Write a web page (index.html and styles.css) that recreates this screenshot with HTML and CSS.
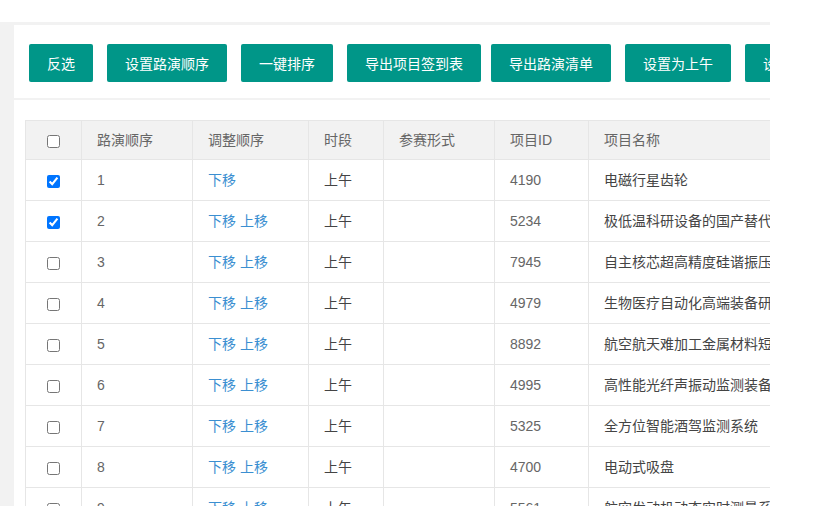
FILE: index.html
```html
<!DOCTYPE html>
<html>
<head>
    <meta charset="UTF-8">
    <title>路演顺序管理</title>
    <link rel="stylesheet" href="styles.css">
</head>
<body>
    <div class="frame">
        <div class="card card-head">
            <div class="toolbar">
                <button class="btn">反选</button>
                <button class="btn">设置路演顺序</button>
                <button class="btn">一键排序</button>
                <button class="btn">导出项目签到表</button>
                <button class="btn tight">导出路演清单</button>
                <button class="btn">设置为上午</button>
                <button class="btn">设置为下午</button>
            </div>
        </div>
        <div class="card card-body">
            <table class="grid">
                <colgroup>
                    <col style="width:56px">
                    <col style="width:111px">
                    <col style="width:116px">
                    <col style="width:75px">
                    <col style="width:111px">
                    <col style="width:94px">
                    <col style="width:300px">
                </colgroup>
                <thead>
                    <tr>
                        <th class="check"><input type="checkbox"></th>
                        <th>路演顺序</th>
                        <th>调整顺序</th>
                        <th>时段</th>
                        <th>参赛形式</th>
                        <th>项目ID</th>
                        <th>项目名称</th>
                    </tr>
                </thead>
                <tbody id="rows"></tbody>
            </table>
        </div>
    </div>

    <script>
        const projects = [
            { id: 4190, name: "电磁行星齿轮", checked: true },
            { id: 5234, name: "极低温科研设备的国产替代", checked: true },
            { id: 7945, name: "自主核芯超高精度硅谐振压力传感器" },
            { id: 4979, name: "生物医疗自动化高端装备研发" },
            { id: 8892, name: "航空航天难加工金属材料短流程制造" },
            { id: 4995, name: "高性能光纤声振动监测装备" },
            { id: 5325, name: "全方位智能酒驾监测系统" },
            { id: 4700, name: "电动式吸盘" },
            { id: 5561, name: "航空发动机动态实时测量系统" }
        ];

        const tbody = document.getElementById('rows');

        projects.forEach((p, i) => {
            const links = i === 0
                ? '<a class="link">下移</a>'
                : '<a class="link">下移</a> <a class="link">上移</a>';
            const tr = document.createElement('tr');
            tr.innerHTML = `
                <td class="check"><input type="checkbox" ${p.checked ? 'checked' : ''}></td>
                <td>${i + 1}</td>
                <td>${links}</td>
                <td class="dark">上午</td>
                <td></td>
                <td>${p.id}</td>
                <td class="dark">${p.name}</td>`;
            tbody.appendChild(tr);
        });
    </script>
</body>
</html>
```

FILE: styles.css
```css
* {
    box-sizing: border-box;
}

body {
    margin: 0;
    background: #fff;
    font-family: "Liberation Sans", Arial, "Noto Sans CJK SC", sans-serif;
    font-size: 14px;
    color: #666;
}

.frame {
    width: 770px;
    height: 484px;
    margin-top: 22px;
    padding: 3px 0 0 14px;
    background: #f2f2f2;
    overflow: hidden;
}

.card {
    width: 900px;
    background: #fff;
}

.card-head {
    padding: 19px 15px 16px;
    margin-bottom: 2px;
}

.toolbar {
    display: flex;
    gap: 14px;
    white-space: nowrap;
}

.btn {
    height: 38px;
    padding: 0 18px;
    border: none;
    border-radius: 2px;
    background: #009688;
    color: #fff;
    font-family: inherit;
    font-size: 14px;
    flex-shrink: 0;
}

.btn.tight {
    margin-left: -4px;
}

.card-body {
    padding: 20px 11px;
    height: 500px;
}

.grid {
    table-layout: fixed;
    width: 863px;
    border-collapse: collapse;
}

.grid th,
.grid td {
    height: 41px;
    padding: 10px 15px;
    line-height: 20px;
    border: 1px solid #e6e6e6;
    text-align: left;
    font-weight: normal;
    white-space: nowrap;
    overflow: hidden;
}

.grid th {
    height: 39px;
    padding: 9px 15px;
    background: #f2f2f2;
    color: #666;
}

.grid th.check,
.grid td.check {
    padding: 0;
    text-align: center;
}

.check input {
    margin: 0;
    vertical-align: middle;
    width: 13px;
    height: 13px;
}

.grid td.dark {
    color: #444;
}

.link {
    color: #3b8fd1;
    cursor: pointer;
}
```
